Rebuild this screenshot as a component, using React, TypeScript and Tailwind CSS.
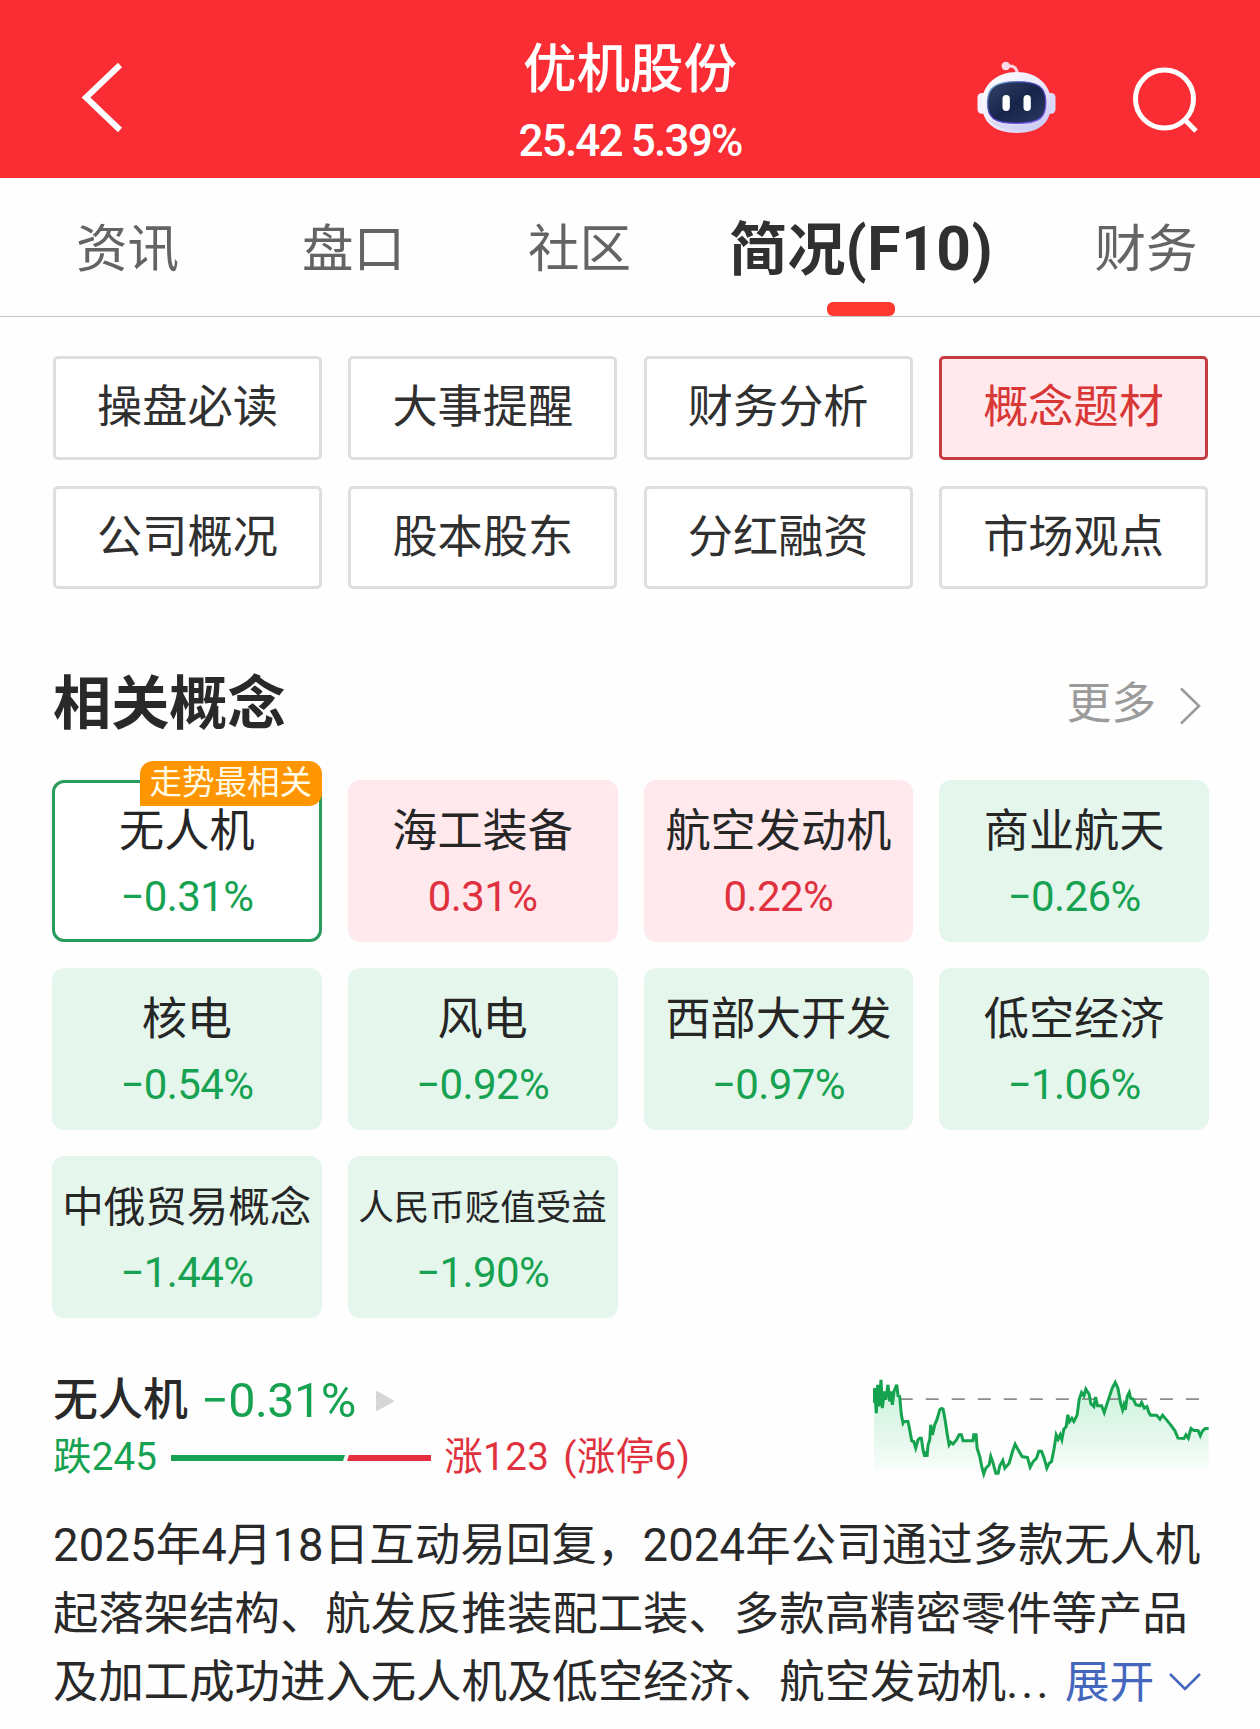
import clsx from 'clsx';

type Concept = {
  name: string;
  change: string;
  tag?: string;
  nameClass?: string;
};

const tabs = [
  { label: '资讯', className: 'ml-[76px]' },
  { label: '盘口', className: 'ml-[123px]' },
  { label: '社区', className: 'ml-[123px]' },
  { label: '简况', suffix: '(F10)', className: 'ml-[98px]', active: true },
  { label: '财务', className: 'ml-[101px]' },
];

const sections = [
  '操盘必读',
  '大事提醒',
  '财务分析',
  '概念题材',
  '公司概况',
  '股本股东',
  '分红融资',
  '市场观点',
];

const concepts: Concept[] = [
  { name: '无人机', change: '−0.31%', tag: '走势最相关' },
  { name: '海工装备', change: '0.31%' },
  { name: '航空发动机', change: '0.22%' },
  { name: '商业航天', change: '−0.26%' },
  { name: '核电', change: '−0.54%' },
  { name: '风电', change: '−0.92%' },
  { name: '西部大开发', change: '−0.97%' },
  { name: '低空经济', change: '−1.06%' },
  { name: '中俄贸易概念', change: '−1.44%', nameClass: 'text-[41.5px]' },
  { name: '人民币贬值受益', change: '−1.90%', nameClass: 'text-[35.5px]' },
];

const trend =
  '43,130 45,85 50,160 54,75 58,140 64,60 68,145 74,95 78,120 85,75 90,125 94,95 98,135 103,95 111,75 115,108 120,110 125,165 130,190 133,185 145,185 150,210 156,243 162,245 168,265 175,240 180,235 185,235 190,270 195,290 198,275 202,290 205,255 210,240 213,195 218,225 225,195 232,178 240,150 245,146 250,148 256,180 262,220 268,255 273,247 280,252 290,240 298,225 305,225 310,243 340,243 342,225 349,225 352,265 360,290 366,320 372,342 378,325 388,315 393,290 400,310 408,340 415,340 420,318 429,302 435,325 448,310 458,275 466,253 475,270 487,290 503,293 511,322 520,305 530,295 537,274 545,274 553,295 561,325 568,310 575,305 583,265 589,225 595,238 601,225 606,240 612,208 619,200 624,165 629,185 636,175 642,185 652,165 658,118 665,98 672,108 678,88 688,104 693,132 702,140 707,112 713,138 725,138 733,158 742,130 748,112 757,85 766,68 774,85 782,130 788,150 792,135 796,150 802,110 808,98 812,115 820,118 828,135 840,138 845,128 853,145 861,140 867,158 872,166 890,166 900,178 908,166 918,178 932,195 945,213 954,235 972,236 978,225 985,235 993,206 1002,212 1014,212 1021,228 1027,214 1036,206 1046,206';

function Robot() {
  return (
    <svg viewBox="50 58 245 222" className="h-[74px] w-[82px]">
      <defs>
        <linearGradient id="shell" x1="0" y1="0" x2="1" y2="1">
          <stop offset="0" stopColor="#ffffff" />
          <stop offset="0.55" stopColor="#ece8fa" />
          <stop offset="1" stopColor="#bfc2f2" />
        </linearGradient>
        <linearGradient id="rim" x1="0" y1="0" x2="1" y2="1">
          <stop offset="0" stopColor="#7fd6e8" />
          <stop offset="0.4" stopColor="#4a3fb8" />
          <stop offset="1" stopColor="#7a5cf0" />
        </linearGradient>
        <linearGradient id="visor" x1="0" y1="0" x2="1" y2="1">
          <stop offset="0" stopColor="#34426a" />
          <stop offset="0.5" stopColor="#17254a" />
          <stop offset="1" stopColor="#2a3864" />
        </linearGradient>
      </defs>
      <path d="M140 77 Q172 72 173 98" fill="none" stroke="#fbd3e0" strokeWidth="9" />
      <circle cx="139" cy="76" r="13" fill="#fbd9e6" />
      <rect x="54" y="157" width="30" height="62" rx="13" fill="#f3effc" />
      <rect x="258" y="157" width="30" height="62" rx="13" fill="#dcd9f8" />
      <path
        d="M172 94 C232 94 275 132 275 188 C275 246 240 277 172 277 C104 277 67 246 67 188 C67 132 112 94 172 94Z"
        fill="url(#shell)"
      />
      <path d="M85 235 Q170 272 256 235 Q230 268 172 268 Q112 268 85 235Z" fill="#cfcdf3" opacity="0.6" />
      <path
        d="M172 123 C236 123 258 140 259 183 C260 232 240 248 172 248 C104 248 83 232 84 183 C85 140 108 123 172 123Z"
        fill="url(#visor)"
        stroke="url(#rim)"
        strokeWidth="4"
      />
      <rect x="129" y="163" width="22" height="48" rx="11" fill="#fff" />
      <rect x="192" y="163" width="22" height="48" rx="11" fill="#fff" />
    </svg>
  );
}

function Header() {
  return (
    <header className="flex h-[178px] justify-between bg-[#f92d33] text-white">
      <div className="w-[400px] pt-[60px] pl-[80px]">
        <svg viewBox="0 0 46 76" className="h-[76px] w-[46px]" fill="none" stroke="#fff" strokeWidth="6">
          <path d="M40 5 L6 37.5 L40 70" />
        </svg>
      </div>
      <div className="flex flex-col items-center pt-[38px]">
        <h1 className="text-[53.5px] leading-[64px] font-medium">优机股份</h1>
        <p className="mt-[7px] text-[44px] leading-[64px] font-medium tracking-[-1.8px]">25.42 5.39%</p>
      </div>
      <div className="flex w-[400px] justify-end gap-[74px] pt-[60px] pr-[60px]">
        <Robot />
        <svg viewBox="0 0 68 68" className="mt-[6px] h-[68px] w-[68px]" fill="none" stroke="#fff" strokeWidth="5">
          <circle cx="32.5" cy="33" r="29" />
          <path d="M53 54 L64 65" />
        </svg>
      </div>
    </header>
  );
}

function Tabs() {
  return (
    <nav className="flex h-[139px] border-b border-[#c6c6c6] whitespace-nowrap">
      {tabs.map((tab) => (
        <div key={tab.label} className={clsx('flex flex-col items-center', tab.className)}>
          <span
            className={clsx(
              'mt-[34px] h-[80px] leading-[76px]',
              tab.active ? 'text-[58.2px] font-bold text-[#303030]' : 'text-[51.5px] text-[#646464]'
            )}
          >
            {tab.label}
            {tab.suffix && <span className="text-[60.5px] leading-none tracking-[0.6px]">{tab.suffix}</span>}
          </span>
          {tab.active && <span className="mt-[10px] h-[14px] w-[68px] rounded-[6px] bg-[#ff3830]" />}
        </div>
      ))}
    </nav>
  );
}

function ConceptCard({ concept, selected }: { concept: Concept; selected: boolean }) {
  const down = concept.change.startsWith('−');
  return (
    <div
      className={clsx(
        'relative flex h-[162px] flex-col items-center rounded-[12px] border-[3px] whitespace-nowrap',
        selected && 'border-[#289c5c] bg-white',
        !selected && down && 'border-[#e5f6ed] bg-[#e5f6ed]',
        !selected && !down && 'border-[#ffe9ed] bg-[#ffe9ed]'
      )}
    >
      {concept.tag && (
        <span className="absolute -top-[22px] -right-[3px] h-[45px] w-[182px] rounded-[13px] rounded-bl-none bg-[#ff9500] text-center text-[32.5px] leading-[44px] text-[#fffbe6]">
          {concept.tag}
        </span>
      )}
      <span className={clsx('mt-[19px] h-[60px] leading-[60px] text-[#262626]', concept.nameClass ?? 'text-[45.2px]')}>
        {concept.name}
      </span>
      <span
        className={clsx('mt-[5px] text-[42px] leading-[60px] tracking-[-0.6px]', down ? 'text-[#17a251]' : 'text-[#e0313f]')}
      >
        {concept.change}
      </span>
    </div>
  );
}

function Sparkline() {
  return (
    <svg viewBox="40 40 1010 320" className="h-[107px] w-[337px]">
      <defs>
        <linearGradient id="area" x1="0" y1="0" x2="0" y2="1">
          <stop offset="0" stopColor="#c9f2d9" />
          <stop offset="0.6" stopColor="#e4f7ec" />
          <stop offset="1" stopColor="#fafefc" />
        </linearGradient>
      </defs>
      <polygon points={`43,332 ${trend} 1046,332`} fill="url(#area)" />
      <path d="M120 118 H1018" stroke="#8c8c8c" strokeWidth="5" strokeDasharray="39 39" />
      <polyline points={trend} fill="none" stroke="#16a34f" strokeWidth="9" />
    </svg>
  );
}

export default function App() {
  return (
    <div className="h-[1729px] w-[1260px] overflow-hidden bg-[#fefefe] font-[Roboto,'Noto_Sans_CJK_SC',sans-serif] text-[#292929]">
      <Header />
      <Tabs />

      <div className="mt-[39px] mr-[52px] ml-[53px] grid grid-cols-4 gap-x-[26.4px] gap-y-[26px]">
        {sections.map((name) => (
          <div
            key={name}
            className={clsx(
              'h-[103.5px] rounded-[5px] border-[3px] text-center text-[45.2px] leading-[98px]',
              name === '概念题材'
                ? 'border-[#c43c42] bg-[#ffe9ed] text-[#d93636]'
                : 'border-[#dedede] bg-white text-[#303030]'
            )}
          >
            {name}
          </div>
        ))}
      </div>

      <div className="mt-[75px] mr-[59px] ml-[53px] flex h-[80px] items-center justify-between">
        <h2 className="text-[58.2px] leading-[80px] font-bold">相关概念</h2>
        <div className="flex items-center text-[44.8px] leading-[80px] text-[#9b9b9b]">
          更多
          <svg viewBox="0 0 22 38" className="mt-[4px] ml-[23px] h-[38px] w-[22px]" fill="none" stroke="#9b9b9b" strokeWidth="2.6">
            <path d="M2 1.5 L20 19 L2 36.5" />
          </svg>
        </div>
      </div>

      <div className="mt-[36px] mr-[51px] ml-[52px] grid grid-cols-4 gap-[26px]">
        {concepts.map((concept, i) => (
          <ConceptCard key={concept.name} concept={concept} selected={i === 0} />
        ))}
      </div>

      <div className="mt-[55px] mr-[50px] ml-[53px] flex justify-between whitespace-nowrap">
        <div>
          <div className="flex h-[56px] items-center">
            <span className="text-[45px] leading-[56px] font-medium">无人机</span>
            <span className="ml-[13px] text-[48.5px] leading-[56px] tracking-[-0.5px] text-[#17a251]">−0.31%</span>
            <svg viewBox="0 0 20 22" className="ml-[19px] h-[22px] w-[20px]">
              <path d="M2 2 L18 11 L2 20Z" fill="#d6d6d6" stroke="#d6d6d6" strokeWidth="2" strokeLinejoin="round" />
            </svg>
          </div>
          <div className="flex h-[56px] items-center text-[38.5px] leading-[56px]">
            <span className="tracking-[0.2px] text-[#17a251]">跌245</span>
            <svg viewBox="0 0 260 6" className="mt-[2px] ml-[14px] h-[6px] w-[260px]">
              <path d="M0 0 H174 L172 6 H0Z" fill="#17a251" />
              <path d="M178 0 H260 V6 H176Z" fill="#e52f3f" />
            </svg>
            <span className="ml-[13px] tracking-[0.4px] text-[#e0313f] [word-spacing:4px]">涨123 (涨停6)</span>
          </div>
        </div>
        <Sparkline />
      </div>

      <div className="mt-[27px] ml-[53px] text-[45.4px] leading-[68.5px] whitespace-nowrap">
        <p className="tracking-[0.15px]">2025年4月18日互动易回复，2024年公司通过多款无人机</p>
        <p>起落架结构、航发反推装配工装、多款高精密零件等产品</p>
        <div className="flex">
          <p>
            及加工成功进入无人机及低空经济、航空发动机<span className="tracking-[3.2px]">...</span>
          </p>
          <div className="ml-[13px] flex items-center text-[44.8px] text-[#4467bd]">
            展开
            <svg viewBox="0 0 34 20" className="-mt-[3px] ml-[14px] h-[20px] w-[34px]" fill="none" stroke="#4467bd" strokeWidth="2.6">
              <path d="M2 2 L17 17 L32 2" />
            </svg>
          </div>
        </div>
      </div>
    </div>
  );
}
